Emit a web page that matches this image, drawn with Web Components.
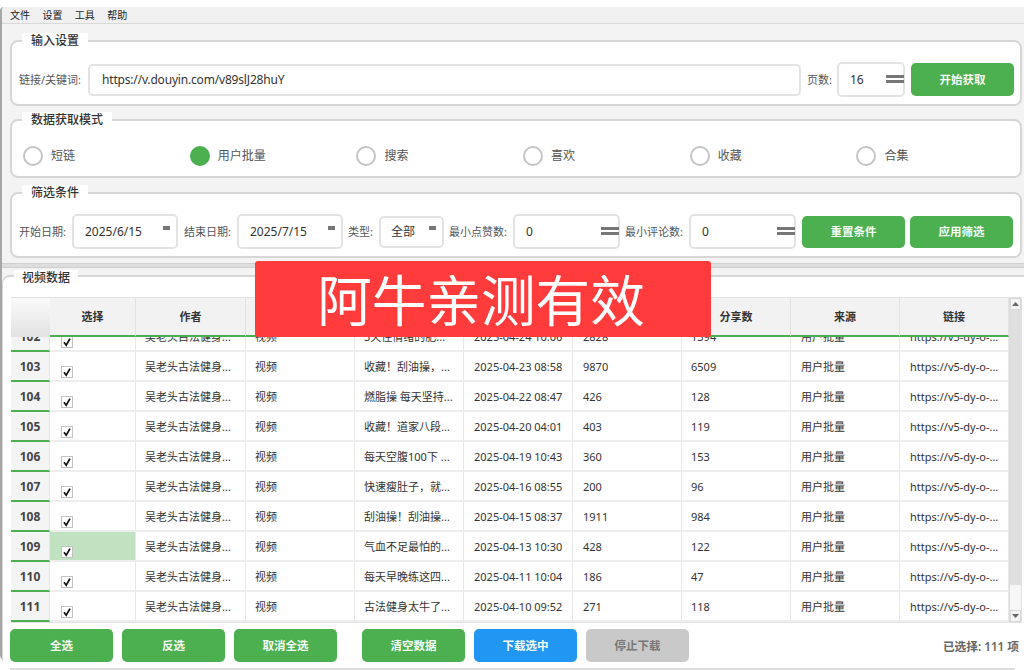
<!DOCTYPE html>
<html lang="zh"><head><meta charset="utf-8"><title>视频数据</title>
<style>
html,body{margin:0;padding:0;background:#fff;}
body{width:1024px;height:670px;overflow:hidden;font-family:"Noto Sans","Noto Sans CJK SC",sans-serif;color:#333;}
</style></head><body>
<x-app>
  <x-menubar slot="menu"><span>文件</span><span>设置</span><span>工具</span><span>帮助</span></x-menubar>

  <x-group title="输入设置" style="height:66px;margin-top:16px">
    <x-row>
      <x-label style="width:64px">链接/关键词:</x-label>
      <x-field w="713" h="32" grow value="https://v.douyin.com/v89slJ28huY" pad="12" ls="-0.18"></x-field>
      <x-label style="width:25px;margin-left:1px">页数:</x-label>
      <x-field w="68" h="35" value="16" pad="11" kind="spin"></x-field>
      <x-btn w="103" style="margin-left:1px">开始获取</x-btn>
    </x-row>
  </x-group>

  <x-group title="数据获取模式" style="height:59px;margin-top:13px">
    <x-radios>
      <x-radio>短链</x-radio><x-radio checked>用户批量</x-radio><x-radio>搜索</x-radio>
      <x-radio>喜欢</x-radio><x-radio>收藏</x-radio><x-radio>合集</x-radio>
    </x-radios>
  </x-group>

  <x-group title="筛选条件" style="height:66px;margin-top:14px">
    <x-row>
      <x-label style="width:48px">开始日期:</x-label>
      <x-field w="106" h="35" value="2025/6/15" pad="11" kind="arrow"></x-field>
      <x-label style="width:48px;margin-left:1px">结束日期:</x-label>
      <x-field w="106" h="35" value="2025/7/15" pad="11" kind="arrow"></x-field>
      <x-label style="width:26px">类型:</x-label>
      <x-field w="65" h="32" value="全部" pad="10" kind="arrow"></x-field>
      <x-label style="width:59px">最小点赞数:</x-label>
      <x-field w="107" h="35" value="0" pad="11" kind="spin"></x-field>
      <x-label style="width:59px">最小评论数:</x-label>
      <x-field w="107" h="35" value="0" pad="11" kind="spin"></x-field>
      <x-btn w="103" h="32" style="margin-left:1px">重置条件</x-btn>
      <x-btn w="103" h="32">应用筛选</x-btn>
    </x-row>
  </x-group>

  <x-splitter></x-splitter>

  <x-panel title="视频数据">
    <x-table></x-table>
    <x-actions>
      <x-btn w="103">全选</x-btn><x-btn w="103">反选</x-btn><x-btn w="103">取消全选</x-btn>
      <x-btn w="103" style="margin-left:16px">清空数据</x-btn>
      <x-btn w="103" tone="blue">下载选中</x-btn>
      <x-btn w="103" tone="off">停止下载</x-btn>
      <x-status>已选择: 111 项</x-status>
    </x-actions>
  </x-panel>

  <x-stamp slot="stamp">阿牛亲测有效</x-stamp>
</x-app>

<script>
const FONT='"Noto Sans","Noto Sans CJK SC",sans-serif';
function def(name,css,html,init){
  customElements.define(name,class extends HTMLElement{
    constructor(){super();this.attachShadow({mode:'open'});}
    connectedCallback(){
      const h=typeof html==='function'?html(this):html;
      this.shadowRoot.innerHTML='<style>'+css+'</style>'+h;
      if(init)init(this);
    }
  });
}
def('x-app',`
  :host{display:block;position:relative;height:670px;box-sizing:border-box;padding-top:7px;background:#fff;}
  .win{height:654px;background:#f3f3f3;border-left:2px solid #a6a6a6;border-radius:4px 0 0 6px;box-sizing:border-box;display:flex;flex-direction:column;}
  .foot{height:2px;background:#dcdcdc;margin:7px 9px 0 10px;}
  .body{padding:0 2px 0 8px;display:flex;flex-direction:column;}
`,`<div class="win"><slot name="menu"></slot><div class="body"><slot></slot></div></div><div class="foot"></div><slot name="stamp"></slot>`);

def('x-menubar',`
  :host{display:flex;height:17px;box-sizing:border-box;background:#f0f0f0;border-bottom:1px solid #d9d9d9;padding-left:8px;gap:12.4px;align-items:center;font:10px/16px ${FONT};color:#222;border-radius:4px 4px 0 0;}
`,`<slot></slot>`);

def('x-group',`
  :host{display:block;position:relative;box-sizing:border-box;background:#fff;border:2px solid #d6d6d6;border-radius:8px;}
  .t{position:absolute;left:10px;top:-9px;background:#fff;padding:0 9px;font:500 12px/16px ${FONT};color:#333;}
`,h=>`<div class="t">${h.getAttribute('title')}</div><slot></slot>`);

def('x-row',`
  :host{display:flex;align-items:center;gap:5px;height:35px;padding:20px 6px 0 7px;}
`,`<slot></slot>`);

def('x-label',`
  :host{display:block;flex:none;font:11px/16px ${FONT};color:#555;white-space:nowrap;}
`,`<slot></slot>`);

def('x-field',`
  :host{display:block;box-sizing:border-box;flex:none;position:relative;background:#fff;border:2px solid #e3e3e3;border-radius:5px;}
  :host([grow]){flex:1 1 0;min-width:0;}
  .v{display:flex;align-items:center;height:100%;font:12px/16px ${FONT};color:#333;white-space:nowrap;}
  .spin{position:absolute;right:-1px;top:50%;margin-top:-4.5px;width:18px;height:3px;background:#777;box-shadow:0 5px 0 #777;}
  .arrow{position:absolute;right:6px;top:calc(50% - 5.5px);width:7px;height:4px;background:#777;}
`,h=>{
  h.style.width=h.getAttribute('w')+'px';h.style.height=h.getAttribute('h')+'px';
  const k=h.getAttribute('kind');const p=h.getAttribute('pad')||12;const ls=h.getAttribute('ls')||0;
  return `<div class="v" style="padding-left:${p}px;letter-spacing:${ls}px">${h.getAttribute('value')}</div>${k?`<div class="${k}"></div>`:''}`;
});

def('x-btn',`
  :host{display:flex;flex:none;box-sizing:border-box;align-items:center;justify-content:center;height:33px;background:#4caf50;color:#f4fbf4;border-radius:5px;font:600 11.5px/16px ${FONT};}
  :host([tone=blue]){background:#2196f3;}
  :host([tone=off]){background:#c9c9c9;color:#777;}
`,`<slot></slot>`,h=>{h.style.width=h.getAttribute('w')+'px';if(h.getAttribute('h'))h.style.height=h.getAttribute('h')+'px';});

def('x-radios',`
  :host{display:grid;grid-template-columns:repeat(6,166.7px);padding:25px 0 0 11px;}
`,`<slot></slot>`);

def('x-radio',`
  :host{display:flex;align-items:center;gap:8px;font:12px/20px ${FONT};color:#555;}
  i{display:block;width:20px;height:20px;box-sizing:border-box;border:2px solid #c4c4c4;border-radius:50%;background:#fff;}
  :host([checked]) i{background:#4caf50;border-color:#4caf50;}
`,`<i></i><slot></slot>`);

def('x-splitter',`
  :host{display:block;height:5px;margin:5px -2px 0 -8px;background:#dedede;border-top:1px solid #cfcfcf;border-bottom:1px solid #cfcfcf;box-sizing:border-box;}
`,``);

def('x-panel',`
  :host{display:block;position:relative;box-sizing:border-box;margin:7px -2px 0 -8px;padding:20px 2px 0 8px;height:386px;background:#fff;border-top:2px solid #d6d6d6;border-left:1px solid #d6d6d6;border-radius:8px 0 0 0;}
  .t{position:absolute;left:11px;top:-7px;background:#fff;padding:0 8px;font:500 12px/16px ${FONT};color:#333;}
`,h=>`<div class="t">${h.getAttribute('title')}</div><slot></slot>`);

def('x-actions',`
  :host{display:flex;gap:9px;align-items:center;padding:6px 0 0 0;margin-left:-1px;}
`,`<slot></slot>`);

def('x-status',`
  :host{display:block;margin-left:auto;margin-right:3px;font:600 11.7px/16px ${FONT};color:#666;white-space:nowrap;}
`,`<slot></slot>`);

def('x-check',`
  :host{display:block;box-sizing:border-box;width:12px;height:12px;border:1px solid #c2c2c2;background:#fff;margin:5px 0 0 11px;}
  svg{display:block;width:10px;height:10px;}
`,`<svg viewBox="0 0 10 10"><path d="M2 5.2 4.2 8.2 8 1.6" fill="none" stroke="#111" stroke-width="1.7"/></svg>`);

const COLS=[86,110,109,109,109,109,109,109,109];
const PADS=[9,9,9,10,10,9,10,10];
const HEAD=['选择','作者','','','','','分享数','来源','链接'];
const A='吴老头古法健身...';
const ROWS=[
 [102,'3天住情绪的肥...','2025-04-24 10:06','2828','1394'],
 [103,'收藏！刮油操，...','2025-04-23 08:58','9870','6509'],
 [104,'燃脂操 每天坚持...','2025-04-22 08:47','426','128'],
 [105,'收藏！道家八段...','2025-04-20 04:01','403','119'],
 [106,'每天空腹100下 ...','2025-04-19 10:43','360','153'],
 [107,'快速瘦肚子，就...','2025-04-16 08:55','200','96'],
 [108,'刮油操！刮油操...','2025-04-15 08:37','1911','984'],
 [109,'气血不足最怕的...','2025-04-13 10:30','428','122'],
 [110,'每天早晚练这四...','2025-04-11 10:04','186','47'],
 [111,'古法健身太牛了...','2025-04-10 09:52','271','118']
];
def('x-table',`
  :host{display:flex;height:326px;box-sizing:border-box;border:1px solid #e2e2e2;border-left:0;font:11px/16px ${FONT};color:#333;background:#fff;}
  .main{width:998px;flex:none;overflow:hidden;display:flex;flex-direction:column;}
  .hd{display:flex;height:39px;flex:none;background:#f2f2f2;}
  .corner{width:39px;flex:none;background:linear-gradient(#fafafa,#e2e2e2);}
  .hc{box-sizing:border-box;display:flex;align-items:center;justify-content:center;border-right:1px solid #e2e2e2;border-bottom:2px solid #4caf50;font-weight:600;color:#333;flex:none;}
  .r{display:flex;flex:none;height:30px;}
  .clip{height:15px;overflow:hidden;display:flex;flex-direction:column;justify-content:flex-end;flex:none;}
  .n{width:39px;height:30px;flex:none;box-sizing:border-box;display:flex;align-items:center;justify-content:center;padding-top:1px;background:#f4f4f4;border-bottom:2px solid #4caf50;border-right:1px solid #e6e6e6;font:700 12px/16px ${FONT};color:#444;}
  .c{box-sizing:border-box;flex:none;height:30px;display:flex;align-items:center;padding-top:1px;border-right:1px solid #e8e8e8;border-bottom:2px solid #eeeeee;white-space:nowrap;overflow:hidden;}
  .k{padding:9px 0 0 0;display:block;}
  .sel{background:#c0e2c0;}
  .bar{flex:1;display:flex;flex-direction:column;background:#dfdfdf;border-left:1px solid #dcdcdc;}
  .btn{height:12px;flex:none;background:#f4f4f4;border:1px solid #d8d8d8;box-sizing:border-box;display:flex;align-items:center;justify-content:center;}
  .thumb{flex:1;background:#dfdfdf;}
  .track{height:25px;flex:none;background:#f6f6f6;}
  svg{display:block;}
`,h=>{
  const hc=HEAD.map((t,i)=>`<div class="hc" style="width:${COLS[i]}px">${t}</div>`).join('');
  const row=d=>{
    const cells=[A,'视频',d[1],d[2],d[3],d[4],'用户批量','https://v5-dy-o-...'];
    const sel=d[0]===109;
    return `<div class="r"><div class="n">${d[0]}</div>`+
      `<div class="c k${sel?' sel':''}" style="width:${COLS[0]}px"><x-check></x-check></div>`+
      cells.map((t,i)=>`<div class="c" style="width:${COLS[i+1]}px;padding-left:${PADS[i]}px">${t}</div>`).join('')+`</div>`;
  };
  return `<div class="main"><div class="hd"><div class="corner"></div>${hc}</div>`+
    `<div class="clip">${row(ROWS[0])}</div>`+ROWS.slice(1).map(row).join('')+`</div>`+
    `<div class="bar"><div class="btn"><svg width="7" height="4"><path d="M3.5 0 7 4H0z" fill="#666"/></svg></div><div class="thumb"></div><div class="track"></div><div class="btn"><svg width="7" height="4"><path d="M0 0H7L3.5 4z" fill="#666"/></svg></div></div>`;
});

def('x-stamp',`
  :host{position:absolute;left:255px;top:261px;width:456px;height:76px;box-sizing:border-box;display:flex;align-items:center;justify-content:center;padding:0 4px 2px 0;background:#ff3b3b;color:#fff;border-radius:3px;font:54.6px/60px "Noto Sans CJK SC","Noto Sans",sans-serif;white-space:nowrap;}
`,`<slot></slot>`);
</script>
</body></html>
